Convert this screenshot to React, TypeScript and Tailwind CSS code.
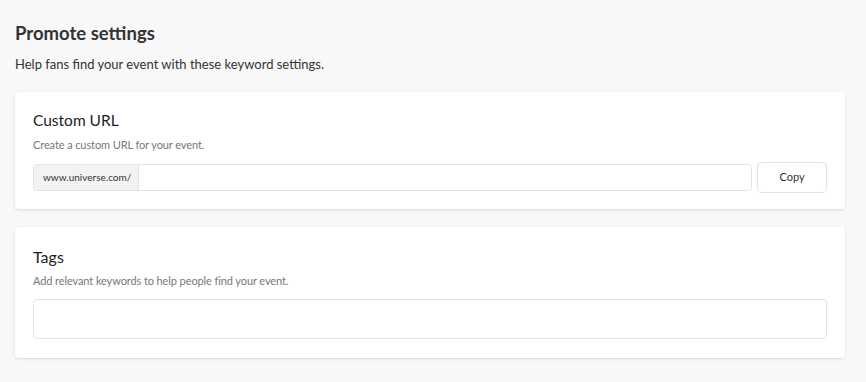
export default function App() {
  return (
    <div className="min-h-[382px] w-[866px] bg-[#f8f8f8] px-[15px] pt-[22px] pb-6 text-[#333]" style={{ fontFamily: "Lato, 'Noto Sans', sans-serif" }}>
      <h1 className="text-[18.5px] font-bold leading-[22px] text-[#333]">Promote settings</h1>
      <p className="mt-[12px] text-[13px] leading-[16px] text-[#333]">Help fans find your event with these keyword settings.</p>

      <div className="mt-[20px] w-[830px] rounded-[4px] bg-white px-[18px] pt-[18px] pb-[16px] shadow-[0_1px_3px_rgba(0,0,0,0.12)]">
        <h2 className="text-[15.5px] leading-[20px] text-[#222]">Custom URL</h2>
        <p className="mt-[8px] text-[11px] leading-[14px] tracking-[-0.1px] text-[#777]">Create a custom URL for your event.</p>
        <div className="mt-[10px] flex items-center gap-[5px]">
          <div className="flex h-[27px] flex-1 overflow-hidden rounded-[4px] border border-[#e3e3e3]">
            <div className="flex w-[105px] items-center border-r border-[#e3e3e3] bg-[#f3f3f3] pl-[9px] text-[10px] text-[#333]">www.universe.com/</div>
            <div className="flex-1 bg-white" />
          </div>
          <button className="h-[31px] w-[70px] rounded-[4px] border border-[#e3e3e3] bg-white text-[11px] text-[#333]">Copy</button>
        </div>
      </div>

      <div className="mt-[18px] w-[830px] rounded-[4px] bg-white px-[18px] pt-[20px] pb-[19px] shadow-[0_1px_3px_rgba(0,0,0,0.12)]">
        <h2 className="text-[16px] leading-[20px] text-[#222]">Tags</h2>
        <p className="mt-[7px] text-[11px] leading-[14px] tracking-[-0.1px] text-[#777]">Add relevant keywords to help people find your event.</p>
        <div className="mt-[11px] h-[40px] rounded-[4px] border border-[#e3e3e3] bg-white" />
      </div>
    </div>
  );
}
